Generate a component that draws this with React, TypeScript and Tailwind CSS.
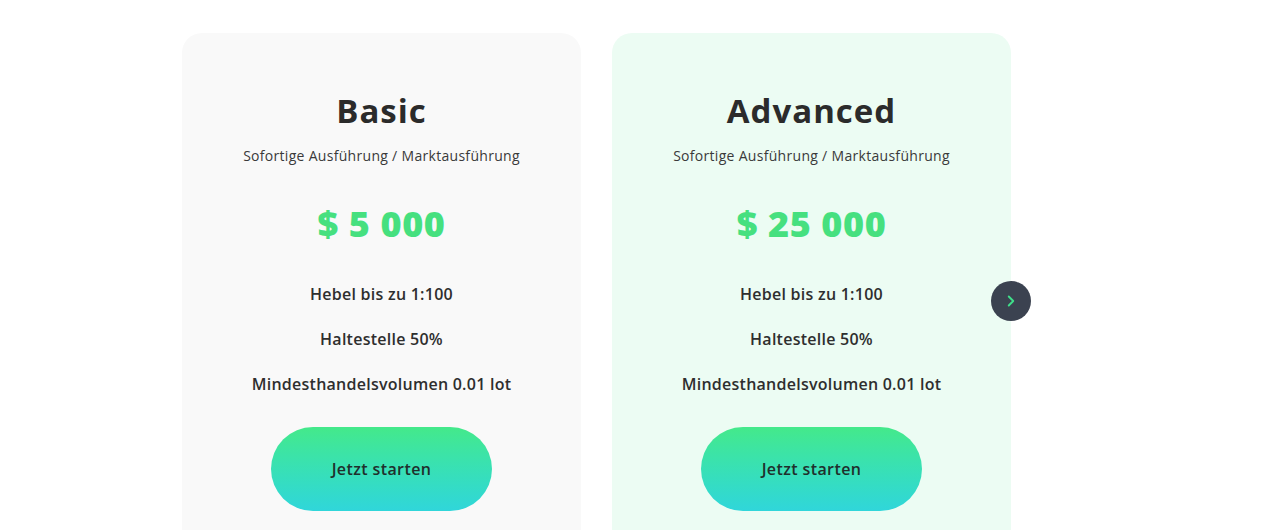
import { ChevronRight } from 'lucide-react';

type Plan = {
  name: string;
  price: string;
  bg: string;
};

const PLANS: Plan[] = [
  { name: 'Basic', price: '$ 5 000', bg: 'bg-[#f9f9f9]' },
  { name: 'Advanced', price: '$ 25 000', bg: 'bg-[#ecfcf3]' },
];

const FEATURES = ['Hebel bis zu 1:100', 'Haltestelle 50%', 'Mindesthandelsvolumen 0.01 lot'];

function PlanCard({ plan, children }: { plan: Plan; children?: React.ReactNode }) {
  return (
    <div className={`relative w-[399px] h-[520px] shrink-0 rounded-[20px] ${plan.bg} flex flex-col items-center pt-[56px]`}>
      <h2 className="text-[33px] leading-[44px] font-bold text-[#2b2b2b] tracking-[1px]">{plan.name}</h2>
      <p className="mt-[13px] text-[14px] leading-[20px] text-[#3a3a3a] tracking-[0.3px]">
        Sofortige Ausführung / Marktausführung
      </p>
      <div className="mt-[36px] text-[36px] leading-[44px] font-extrabold text-[#46e07f] tracking-[0.6px]">{plan.price}</div>
      <ul className="mt-[36px] flex flex-col items-center gap-[21px]">
        {FEATURES.map((f) => (
          <li key={f} className="text-[16px] leading-[24px] font-semibold text-[#2e2e2e] tracking-[0.25px]">
            {f}
          </li>
        ))}
      </ul>
      <button
        type="button"
        className="mt-[31px] w-[221px] h-[84px] rounded-full bg-gradient-to-b from-[#44e98a] to-[#30d6da] text-[16px] font-semibold text-[#1f2f2c] tracking-[0.4px]"
      >
        Jetzt starten
      </button>
      {children}
    </div>
  );
}

export default function App() {
  return (
    <div
      className="w-[1266px] h-[530px] overflow-hidden bg-white"
      style={{ fontFamily: '"Open Sans", "Noto Sans", sans-serif' }}
    >
      <div className="flex gap-[31px] pl-[182px] pt-[33px]">
        <PlanCard plan={PLANS[0]} />
        <PlanCard plan={PLANS[1]}>
          <button
            type="button"
            className="absolute right-[-20px] top-[248px] w-[40px] h-[40px] rounded-full bg-[#3b4250] flex items-center justify-center"
          >
            <ChevronRight className="w-[18px] h-[18px] text-[#3fdf8a]" strokeWidth={2.5} />
          </button>
        </PlanCard>
      </div>
    </div>
  );
}
